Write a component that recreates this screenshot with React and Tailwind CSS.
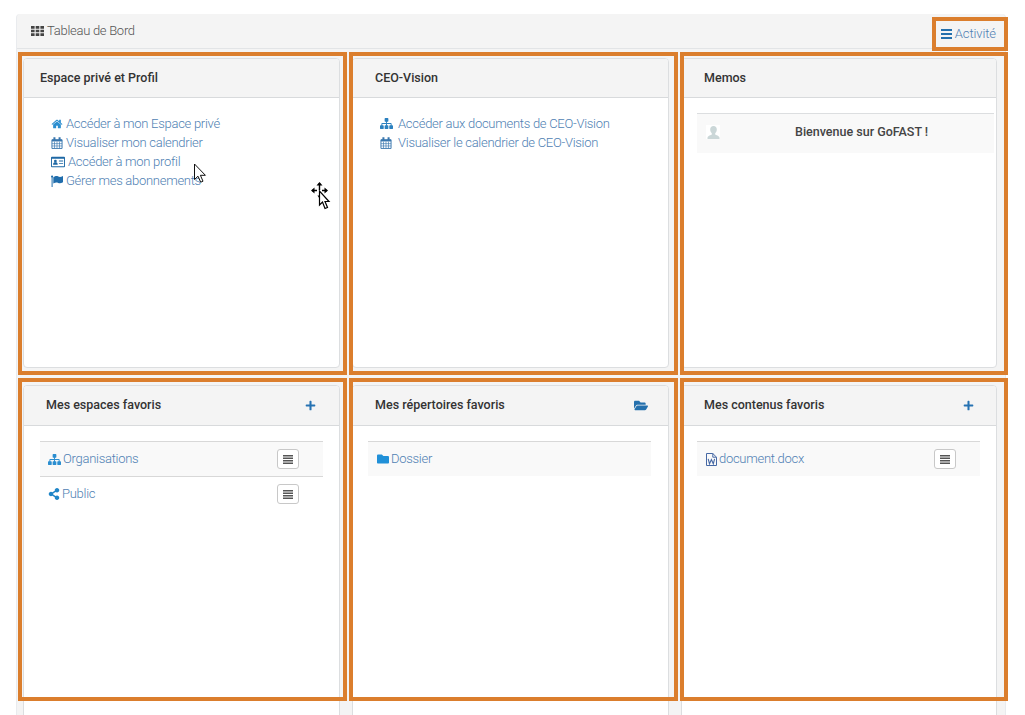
import { FaShareAlt, FaFolder, FaFolderOpen, FaPlus } from "react-icons/fa";

function Glyph({ className, d, box = "0 0 1792 1792" }) {
  return (
    <svg className={className} viewBox={box} fill="currentColor">
      <path d={d} />
    </svg>
  );
}

const HOME = "M1472 992v480q0 26-19 45t-45 19h-384v-384h-256v384h-384q-26 0-45-19t-19-45v-480q0-1 .5-3t.5-3l575-474 575 474q1 2 1 6zm223-69l-62 74q-8 9-21 11h-3q-13 0-21-7l-692-577-692 577q-12 8-24 7-13-2-21-11l-62-74q-8-10-7-23.5t11-21.5l719-599q32-26 76-26t76 26l244 204v-195q0-14 9-23t23-9h192q14 0 23 9t9 23v408l219 182q10 8 11 21.5t-7 23.5z";
const SITEMAP = "M1792 1248v320q0 40-28 68t-68 28h-320q-40 0-68-28t-28-68v-320q0-40 28-68t68-28h96v-192h-512v192h96q40 0 68 28t28 68v320q0 40-28 68t-68 28h-320q-40 0-68-28t-28-68v-320q0-40 28-68t68-28h96v-192h-512v192h96q40 0 68 28t28 68v320q0 40-28 68t-68 28h-320q-40 0-68-28t-28-68v-320q0-40 28-68t68-28h96v-192q0-52 38-90t90-38h512v-192h-96q-40 0-68-28t-28-68v-320q0-40 28-68t68-28h320q40 0 68 28t28 68v320q0 40-28 68t-68 28h-96v192h512q52 0 90 38t38 90v192h96q40 0 68 28t28 68z";

function Calendar({ className }) {
  return (
    <svg className={className} viewBox="0 0 13 13" fill="none" stroke="currentColor">
      <path d="M1 3h11v9.4H1z" />
      <path d="M1 3.800h11" strokeWidth="2" />
      <path d="M3.7 0.3v3M9.3 0.3v3" strokeWidth="2.200" />
      <path d="M3.8 5v7M6.5 5v7M9.2 5v7M1 7.2h11M1 9.7h11" strokeWidth="0.7" />
    </svg>
  );
}

function IdCard({ className }) {
  return (
    <svg className={className} viewBox="0 0 15 12" fill="currentColor">
      <path d="M1 .5h13a1 1 0 0 1 1 1v9a1 1 0 0 1-1 1H1a1 1 0 0 1-1-1v-9a1 1 0 0 1 1-1zm0 2v8h13v-8z" fillRule="evenodd" />
      <circle cx="4.7" cy="5" r="1.5" />
      <path d="M2.2 9c0-2 1-2.6 2.5-2.6S7.200 7 7.200 9zM8.500 4.500h4.500v1H8.500zM8.500 7h4.500v1H8.500z" />
    </svg>
  );
}

function Flag({ className }) {
  return (
    <svg className={className} viewBox="0 0 12 12" fill="currentColor">
      <circle cx="1.100" cy="1.500" r="1.100" />
      <path d="M.6 1.500h1V12h-1z" />
      <path d="M2.300 2.200C4.500.8 5.800.8 7.300 1.500c1.500.7 2.700.4 4.700-.6v6.400c-2 1.100-3.300 1.300-4.900.6-1.500-.7-2.700-.5-4.800.7z" />
    </svg>
  );
}

function WordFile({ className }) {
  return (
    <svg className={className} viewBox="0 0 11 13" fill="none" stroke="currentColor">
      <path d="M.5.5h6.300l3.700 3.700v8.300H.5z" />
      <path d="M6.800.5v3.700h3.700" />
      <path d="M2.200 5.800l1.300 5 1.900-4.300 1.900 4.300 1.300-5" strokeWidth="1.100" />
    </svg>
  );
}

function Bars({ className }) {
  return <Glyph className={className} box="0 0 11 10" d="M0 0h11v2H0zM0 4h11v2H0zM0 8h11v2H0z" />;
}

function Justify({ className }) {
  return <Glyph className={className} box="0 0 10 9" d="M0 0h10v1.400H0zM0 2.530h10v1.400H0zM0 5.060h10v1.400H0zM0 7.600h10v1.400H0z" />;
}

function Grid({ className }) {
  return <Glyph className={className} box="0 0 13 10" d="M0 0h3.600v2.700H0zM4.700 0h3.600v2.700H4.700zM9.400 0h3.600v2.700H9.400zM0 3.650h3.600v2.700H0zM4.700 3.650h3.600v2.700H4.700zM9.400 3.650h3.600v2.700H9.400zM0 7.300h3.600v2.700H0zM4.700 7.300h3.600v2.700H4.700zM9.400 7.300h3.600v2.700H9.400z" />;
}

function Card({ title, headClass = "h-[39px] pl-[22px] pr-[22px]", action, children }) {
  return (
    <section className="flex min-w-0 flex-col rounded-[4px] border border-[#dcdee0] bg-white">
      <header className={`flex shrink-0 items-center justify-between rounded-t-[3px] border-b border-[#d8dadc] bg-[#f4f4f4] text-[12.5px] font-medium tracking-normal text-[#333] ${headClass}`}>
        <h2>{title}</h2>
        {action}
      </header>
      {children}
    </section>
  );
}

function Link({ icon, gap = "gap-[3px]", children }) {
  return (
    <a className={`flex h-[19px] items-center whitespace-nowrap ${gap}`}>
      {icon}
      <span>{children}</span>
    </a>
  );
}

function MenuButton() {
  return (
    <button className="mr-[24px] flex h-[20px] w-[22px] items-center justify-center rounded-[3px] border border-[#c8c8c8] bg-white text-[#555]">
      <Justify className="h-[9px] w-[10px]" />
    </button>
  );
}

function Row({ striped, icon, label, menu }) {
  return (
    <div className={`flex h-[35px] w-[283px] items-center justify-between border-t border-[#d8d8d8] pl-2 ${striped ? "bg-[#f9f9f9]" : ""}`}>
      <Link icon={icon} gap="gap-[2px]">{label}</Link>
      {menu && <MenuButton />}
    </div>
  );
}

function Frame({ className }) {
  return <div className={`pointer-events-none absolute border-4 border-[#db7e2d] ${className}`} />;
}

export default function App() {
  return (
    <div className="relative h-[715px] w-[1025px] overflow-hidden bg-white pl-4 pt-[14px] font-['Roboto','Liberation_Sans',sans-serif] text-[13px] font-light tracking-[-0.28px] text-[#4f7fb3]">
      <main className="h-[701px] w-[990px] rounded-t-[4px] border-x border-[#e9ebee] bg-[#f4f4f4]">
        <header className="flex h-[35px] items-center justify-between border-b border-[#e2e4e6] pl-[14px] pr-[9px]">
          <div className="flex items-center gap-[3px] text-[#555]">
            <Grid className="h-[10px] w-[13px] text-[#444]" />
            <h1>Tableau de Bord</h1>
          </div>
          <a className="mt-[6px] flex items-center gap-[3px]">
            <Bars className="h-[10px] w-[11px] text-[#2470ad]" />
            <span className="tracking-[-0.1px]">Activité</span>
          </a>
        </header>
        <div className="grid grid-cols-[317px_317px_316px] grid-rows-[310px_350px] gap-x-[12px] gap-y-[17px] pl-[6px] pt-[9px]">
          <Card title="Espace privé et Profil" headClass="h-[39px] pl-4 pr-[22px]">
            <nav className="flex flex-col pl-[27px] pt-4">
              <Link icon={<Glyph className="size-[12px] text-[#2b8ed0]" d={HOME} />}>Accéder à mon Espace privé</Link>
              <Link icon={<Calendar className="size-[12px] text-[#3876ae]" />}>Visualiser mon calendrier</Link>
              <Link icon={<IdCard className="h-[12px] w-[14px] text-[#1e68a5]" />}>Accéder à mon profil</Link>
              <Link icon={<Flag className="size-[12px] text-[#206dac]" />}>Gérer mes abonnements</Link>
            </nav>
          </Card>
          <Card title="CEO-Vision">
            <nav className="flex flex-col pl-[27px] pt-4">
              <Link gap="gap-[5px]" icon={<Glyph className="size-[13px] text-[#2b80bf]" d={SITEMAP} />}>Accéder aux documents de CEO-Vision</Link>
              <Link gap="gap-[6px]" icon={<Calendar className="size-[12px] text-[#3876ae]" />}>Visualiser le calendrier de CEO-Vision</Link>
            </nav>
          </Card>
          <Card title="Memos">
            <div className="ml-[15px] mt-[15px] flex h-[40px] w-[297px] items-start border-t border-[#dcdee0] bg-[#f9f9f9] pl-[9px] pt-[9px]">
              <div className="mt-[2px] flex size-[14px] items-end justify-center bg-white">
                <Glyph className="size-[13px] text-[#cbd7d8]" box="0 0 13 13" d="M6.500 0C8.600 0 9.800 1.500 9.800 3.500 9.800 5.300 9 6.600 8.200 7.200v1.200c.6.900 4.100 1 4.300 3.300V13H.5v-1.300C.7 9.400 4.200 9.300 4.800 8.400V7.200C4 6.600 3.200 5.300 3.200 3.500 3.200 1.500 4.400 0 6.500 0z" />
              </div>
              <p className="ml-[75px] text-[12.5px] font-medium tracking-normal text-[#444]">Bienvenue sur GoFAST !</p>
            </div>
          </Card>
          <Card title="Mes espaces favoris" headClass="h-[40px] pl-[22px] pr-[23px]" action={<FaPlus className="size-[11px] text-[#2672b2]" />}>
            <div className="flex flex-col pl-[16px] pt-[15px]">
              <Row striped menu label="Organisations" icon={<Glyph className="size-[13px] text-[#2b8ed0]" d={SITEMAP} />} />
              <Row menu label="Public" icon={<FaShareAlt className="size-[12px] text-[#2086c8]" />} />
            </div>
          </Card>
          <Card title="Mes répertoires favoris" headClass="h-[40px] pl-[22px] pr-[20px]" action={<FaFolderOpen className="h-[13px] w-[14px] text-[#2470ad]" />}>
            <div className="flex flex-col pl-[15px] pt-[15px]">
              <Row striped label="Dossier" icon={<FaFolder className="ml-px size-[12px] text-[#2090d8]" />} />
            </div>
          </Card>
          <Card title="Mes contenus favoris" headClass="h-[40px] pl-[22px] pr-[22px]" action={<FaPlus className="size-[11px] text-[#2672b2]" />}>
            <div className="flex flex-col pl-[15px] pt-[15px]">
              <Row striped menu label="document.docx" icon={<WordFile className="ml-px h-[13px] w-[11px] text-[#4668a4]" />} />
            </div>
          </Card>
        </div>
      </main>

      <Frame className="left-[932px] top-[17px] h-[34px] w-[76px]" />
      <Frame className="left-[18px] top-[52px] h-[323px] w-[329px]" />
      <Frame className="left-[349px] top-[52px] h-[323px] w-[329px]" />
      <Frame className="left-[680px] top-[52px] h-[323px] w-[328px]" />
      <Frame className="left-[18px] top-[378px] h-[323px] w-[329px]" />
      <Frame className="left-[349px] top-[378px] h-[323px] w-[329px]" />
      <Frame className="left-[680px] top-[378px] h-[323px] w-[328px]" />

      <svg className="absolute left-[194px] top-[163px] h-[20px] w-[13px]" viewBox="0 0 13 20">
        <path d="M.5 1v15.500l3.500-3.300 2.700 6 2.300-1-2.600-5.900h5z" fill="#fff" stroke="#111" />
      </svg>
      <svg className="absolute left-[311px] top-[182px] h-[28px] w-[20px]" viewBox="0 0 20 28">
        <path d="M8.500 1v7M1 8.500h5M11 8.500h5" stroke="#000" strokeWidth="1.400" fill="none" />
        <path d="M8.500 0l3 3.500h-6zM0 8.500L3.500 5.500v6zM17 8.500L13.500 5.500v6z" fill="#000" />
        <path d="M6.500 13.500h2v3z" fill="#000" />
        <path d="M8.500 9v14l3-3 2.500 6.500 2.500-1-2.500-6h4z" fill="#fff" stroke="#000" strokeWidth="1.200" />
      </svg>
    </div>
  );
}
